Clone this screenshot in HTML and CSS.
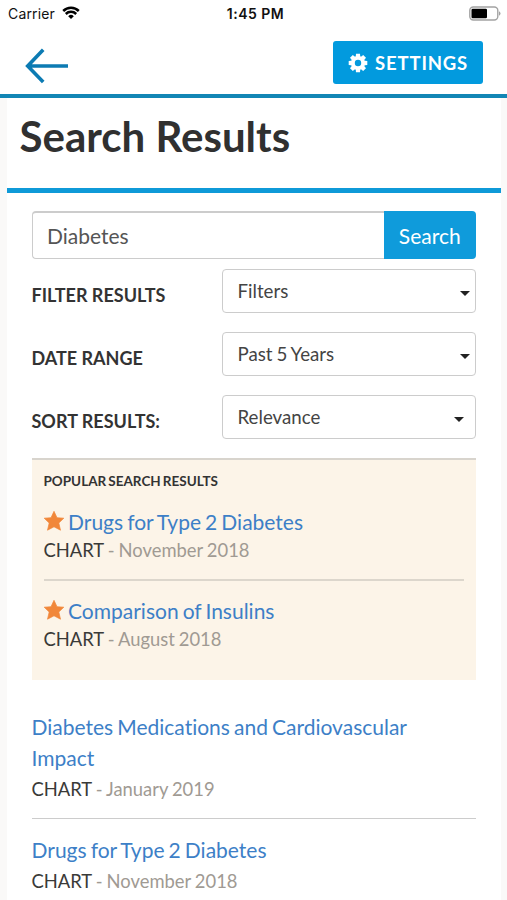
FILE: index.html
```html
<!DOCTYPE html>
<html lang="en">
<head>
<meta charset="utf-8">
<title>Search Results</title>
<link rel="stylesheet" href="styles.css">
</head>
<body>
<div class="status">
  <div class="carrier"><span class="carrier-name">Carrier</span>
    <svg class="wifi" width="18" height="13" viewBox="0 0 18 13" fill="none" stroke="#000" stroke-width="2.5"><path d="M1.2 5A11.1 11.1 0 0 1 16.8 5"/><path d="M3.8 8A7.4 7.4 0 0 1 14.2 8"/><path d="M9 13 6.2 10.2A4 4 0 0 1 11.8 10.2Z" fill="#000" stroke="none"/></svg>
  </div>
  <div class="clock"><span class="clock-text">1:45 PM</span></div>
  <div class="power"><svg width="32" height="15" viewBox="0 0 32 15"><rect x=".8" y="1" width="28" height="13" rx="3.5" fill="#fff" stroke="#a3a3a3" stroke-width="1.4"/><rect x="2.5" y="2.8" width="15.5" height="9.4" rx="1.2"/><path d="M30 5.3Q31.5 6 31.5 7.5T30 9.7Z" fill="#a3a3a3"/></svg></div>
</div>
<header class="topbar">
  <a class="back" href="#" aria-label="Back"><svg width="44" height="36" viewBox="0 0 44 36" fill="none" stroke="#0c7bb3" stroke-width="3.6"><path d="M18.2 1.8 2.7 18 18.2 34M3 18H43"/></svg></a>
  <a class="settings" href="#"><svg width="20" height="20" viewBox="-10 -10 20 20"><g fill="#fff"><path id="tooth" d="M-2-9.3H2L2.4-5H-2.4Z"/><use href="#tooth" transform="rotate(45)"/><use href="#tooth" transform="rotate(90)"/><use href="#tooth" transform="rotate(135)"/><use href="#tooth" transform="rotate(180)"/><use href="#tooth" transform="rotate(225)"/><use href="#tooth" transform="rotate(270)"/><use href="#tooth" transform="rotate(315)"/></g><circle r="5.1" fill="none" stroke="#fff" stroke-width="3.8"/></svg><span class="settings-text">SETTINGS</span></a>
</header>
<main class="page">
  <div class="heading"><h1><span>Search Results</span></h1></div>
  <div class="content">
    <div class="search"><div class="query"><span>Diabetes</span></div><div class="submit"><span>Search</span></div></div>
    <div class="field"><div class="label"><span>FILTER RESULTS</span></div><div class="select"><span>Filters</span><i class="caret"></i></div></div>
    <div class="field"><div class="label"><span>DATE RANGE</span></div><div class="select"><span>Past 5 Years</span><i class="caret"></i></div></div>
    <div class="field"><div class="label"><span>SORT RESULTS:</span></div><div class="select inset"><span>Relevance</span><i class="caret"></i></div></div>
    <section class="popular">
      <h2><span>POPULAR SEARCH RESULTS</span></h2>
      <article class="item">
        <a class="link" href="#"><svg class="star" width="20" height="20" viewBox="0 0 20 20"><path d="M10 .3 13 6.7 19.8 7.2 14.8 12 16.5 19.2 10 15.8 3.5 19.2 5.2 12 .2 7.2 7 6.7Z" fill="#f1873a" stroke="#f1873a" stroke-width=".7" stroke-linejoin="round"/></svg><span>Drugs for Type 2 Diabetes</span></a>
        <div class="meta"><b>CHART</b> <span>- November 2018</span></div>
      </article>
      <article class="item">
        <a class="link" href="#"><svg class="star" width="20" height="20" viewBox="0 0 20 20"><path d="M10 .3 13 6.7 19.8 7.2 14.8 12 16.5 19.2 10 15.8 3.5 19.2 5.2 12 .2 7.2 7 6.7Z" fill="#f1873a" stroke="#f1873a" stroke-width=".7" stroke-linejoin="round"/></svg><span>Comparison of Insulins</span></a>
        <div class="meta"><b>CHART</b> <span>- August 2018</span></div>
      </article>
    </section>
    <section class="results">
      <article class="result">
        <a class="title" href="#">Diabetes Medications and Cardiovascular Impact</a>
        <div class="meta"><b>CHART</b> <span>- January 2019</span></div>
      </article>
      <article class="result">
        <a class="title" href="#">Drugs for Type 2 Diabetes</a>
        <div class="meta"><b>CHART</b> <span>- November 2018</span></div>
      </article>
    </section>
  </div>
</main>
</body>
</html>
```

FILE: styles.css
```css
* { box-sizing: border-box; }
html, body { height: 100%; }
body {
  margin: 0;
  height: 900px;
  overflow: hidden;
  display: flex;
  flex-direction: column;
  background: #faf9f8;
  color: #333;
  font-family: Lato, "Liberation Sans", sans-serif;
  font-variant-ligatures: none;
}
a { color: #3d7fc7; text-decoration: none; }
h1, h2 { margin: 0; }

.status {
  flex: none;
  display: grid;
  grid-template-columns: 1fr auto 1fr;
  height: 28px;
  padding: 0 6px 0 8px;
  background: #fff;
  color: #111;
  font: 15px/28px Inter, sans-serif;
}
.carrier { display: flex; align-items: center; gap: 7px; }
.carrier-name { font-size: 14px; letter-spacing: 0.15px; }
.wifi { margin-bottom: 3px; }
.clock { padding-left: 2px; font-size: 14px; font-weight: 600; letter-spacing: 0.5px; }
.power { display: flex; justify-content: flex-end; align-items: center; padding-bottom: 2px; }

.topbar {
  flex: none;
  display: flex;
  justify-content: space-between;
  height: 70px;
  padding: 13px 24.5px 0 25px;
  background: #fff;
  border-bottom: 4px solid #1286b5;
}
.back { padding-top: 7px; }
.settings {
  display: flex;
  align-items: center;
  gap: 7px;
  width: 149.5px;
  height: 43px;
  padding-left: 15px;
  border-radius: 3px;
  background: #029ade;
  color: #fff;
  font-size: 18.5px;
  font-weight: 700;
  letter-spacing: 0.85px;
}

.page { flex: 1; margin: 0 6.5px 0 7px; background: #fff; min-height: 0; }
.heading { height: 95px; padding: 13px 12.5px 0; border-bottom: 5px solid #0f9ad8; }
.heading h1 { font-size: 42px; line-height: 51px; font-weight: 700; color: #303030; }
.content { padding: 18px 24.5px 0 24.5px; }

.search { display: flex; height: 48px; margin-bottom: 10px; }
.query {
  flex: 1;
  padding-left: 14.5px;
  border: 1px solid #ccc;
  border-top: 2px solid #ccc;
  border-right: 0;
  border-radius: 4px 0 0 4px;
  color: #555;
  font-size: 21px;
  line-height: 45px;
}
.submit {
  width: 92.5px;
  border-radius: 0 4px 4px 0;
  background: #0f9bdb;
  color: #fff;
  font-size: 21px;
  line-height: 49px;
  text-align: center;
}
.field { display: flex; height: 44px; margin-bottom: 19px; }
.label { width: 190px; font-size: 18px; line-height: 53px; font-weight: 700; }
.select {
  flex: 1;
  display: flex;
  justify-content: space-between;
  align-items: center;
  padding: 0 5px 0 15px;
  border: 1.5px solid #ccc;
  border-radius: 4px;
  color: #444;
  font-size: 18.7px;
  line-height: 40px;
  word-spacing: -0.8px;
}
.select.inset { padding-right: 11px; }
.caret { margin-top: 5px; border: 5px solid transparent; border-top: 5px solid #222; border-bottom: 0; }

.popular {
  height: 222px;
  padding: 11px 12px 0;
  margin-top: 1px;
  border-top: 2px solid #d8d4cd;
  background: #fcf4e8;
}
.popular h2 { height: 22px; font-size: 13.5px; line-height: 21px; font-weight: 700; word-spacing: -1.2px; }
.item { height: 88px; padding-top: 13px; border-bottom: 2px solid #dcd6cc; }
.item + .item { padding-top: 14px; border-bottom: 0; }
.link, .title { font-size: 21px; line-height: 31px; word-spacing: -1.3px; }
.link { display: flex; align-items: center; gap: 4.5px; height: 31px; }
.star { margin-bottom: 2px; }
.meta { font-size: 18.4px; line-height: 26px; color: #a09a93; word-spacing: -0.7px; }
.meta b { font-weight: 400; color: #3a3a38; }
.results { padding-top: 31px; }
.result { border-bottom: 1px solid #ccc; padding-bottom: 13px; }
.result + .result { padding-top: 15px; border-bottom: 0; }
.title { display: block; padding-right: 24px; }
.results .meta { line-height: 32px; }
```
